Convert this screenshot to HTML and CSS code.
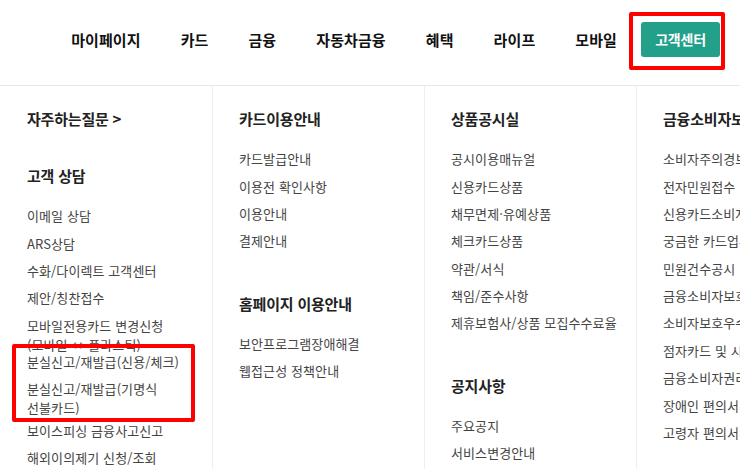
FILE: index.html
```html
<!DOCTYPE html>
<html lang="ko">

<head>
    <meta charset="utf-8">
    <title>고객센터</title>
    <link rel="stylesheet" href="styles.css">
</head>

<body>
    <header class="gnb">
        <ul class="gnb-list">
            <li><a href="#">마이페이지</a></li>
            <li><a href="#">카드</a></li>
            <li><a href="#">금융</a></li>
            <li><a href="#">자동차금융</a></li>
            <li><a href="#">혜택</a></li>
            <li><a href="#">라이프</a></li>
            <li><a href="#">모바일</a></li>
        </ul>
        <a href="#" class="btn-cs">고객센터</a>
    </header>

    <div class="submenu">
        <div class="col">
            <div class="menu-group menu-faq">
                <h3><a href="#">자주하는질문 &gt;</a></h3>
            </div>
            <div class="menu-group">
                <h3>고객 상담</h3>
                <ul class="menu-list">
                    <li><a href="#">이메일 상담</a></li>
                    <li><a href="#">ARS상담</a></li>
                    <li><a href="#">수화/다이렉트 고객센터</a></li>
                    <li><a href="#">제안/칭찬접수</a></li>
                    <li class="tight"><a href="#">모바일전용카드 변경신청 (모바일 ↔ 플라스틱)</a></li>
                    <li><a href="#">분실신고/재발급(신용/체크)</a></li>
                    <li class="tight-sm"><a href="#">분실신고/재발급(기명식 선불카드)</a></li>
                    <li><a href="#">보이스피싱 금융사고신고</a></li>
                    <li><a href="#">해외이의제기 신청/조회</a></li>
                </ul>
            </div>
        </div>

        <div class="col">
            <div class="menu-group">
                <h3>카드이용안내</h3>
                <ul class="menu-list">
                    <li><a href="#">카드발급안내</a></li>
                    <li><a href="#">이용전 확인사항</a></li>
                    <li><a href="#">이용안내</a></li>
                    <li><a href="#">결제안내</a></li>
                </ul>
            </div>
            <div class="menu-group">
                <h3>홈페이지 이용안내</h3>
                <ul class="menu-list">
                    <li><a href="#">보안프로그램장애해결</a></li>
                    <li><a href="#">웹접근성 정책안내</a></li>
                </ul>
            </div>
        </div>

        <div class="col">
            <div class="menu-group">
                <h3>상품공시실</h3>
                <ul class="menu-list">
                    <li><a href="#">공시이용매뉴얼</a></li>
                    <li><a href="#">신용카드상품</a></li>
                    <li><a href="#">채무면제·유예상품</a></li>
                    <li><a href="#">체크카드상품</a></li>
                    <li><a href="#">약관/서식</a></li>
                    <li><a href="#">책임/준수사항</a></li>
                    <li><a href="#">제휴보험사/상품 모집수수료율</a></li>
                </ul>
            </div>
            <div class="menu-group">
                <h3>공지사항</h3>
                <ul class="menu-list">
                    <li><a href="#">주요공지</a></li>
                    <li><a href="#">서비스변경안내</a></li>
                </ul>
            </div>
        </div>

        <div class="col">
            <div class="menu-group">
                <h3>금융소비자보호</h3>
                <ul class="menu-list">
                    <li><a href="#">소비자주의경보</a></li>
                    <li><a href="#">전자민원접수</a></li>
                    <li><a href="#">신용카드소비자보호</a></li>
                    <li><a href="#">궁금한 카드업무</a></li>
                    <li><a href="#">민원건수공시</a></li>
                    <li><a href="#">금융소비자보호실태평가</a></li>
                    <li><a href="#">소비자보호우수사례</a></li>
                    <li><a href="#">점자카드 및 시각장애인 안내</a></li>
                    <li><a href="#">금융소비자권리</a></li>
                    <li><a href="#">장애인 편의서비스</a></li>
                    <li><a href="#">고령자 편의서비스</a></li>
                </ul>
            </div>
        </div>
    </div>

    <!-- 강조 표시 -->
    <div class="mark mark-cs"></div>
    <div class="mark mark-lost"></div>
</body>

</html>
```

FILE: styles.css
```css
* {
    box-sizing: border-box;
}

html,
body {
    margin: 0;
    height: 100%;
    overflow: hidden;
}

body {
    position: relative;
    background: #fff;
    font-family: "Noto Sans CJK KR", "Noto Sans", sans-serif;
    color: #333;
    word-break: keep-all;
}

a {
    color: inherit;
    text-decoration: none;
}

ul {
    list-style: none;
    margin: 0;
    padding: 0;
}

/* 상단 메뉴 */
.gnb {
    display: flex;
    align-items: center;
    justify-content: flex-end;
    height: 86px;
    padding: 0 20px 7px 0;
    border-bottom: 1px solid #e8e8e8;
}

.gnb-list {
    display: flex;
    gap: 40px;
}

.gnb-list a {
    font-size: 15px;
    font-weight: bold;
    color: #111;
    letter-spacing: 0.1px;
}

.btn-cs {
    display: block;
    margin-left: 24px;
    width: 79px;
    height: 35px;
    line-height: 35px;
    text-align: center;
    border-radius: 3px;
    background-color: #22a08a;
    color: #fff;
    font-size: 14px;
    font-weight: bold;
    letter-spacing: -0.2px;
}

/* 하위 메뉴 */
.submenu {
    display: grid;
    grid-template-columns: repeat(4, 212px);
    height: 100%;
}

.col {
    padding: 22px 8px 0 27px;
}

.col + .col {
    border-left: 1px solid #eee;
    padding-left: 26px;
}

.menu-group + .menu-group {
    margin-top: 38px;
}

.menu-faq + .menu-group {
    margin-top: 35px;
}

.menu-group h3 {
    margin: 0 0 15px;
    font-size: 15px;
    line-height: 22px;
    font-weight: bold;
    color: #222;
    letter-spacing: -0.2px;
    white-space: nowrap;
}

.menu-list li {
    padding: 4.2px 0;
    font-size: 13px;
    line-height: 19px;
    color: #444;
    letter-spacing: 0.1px;
}

.menu-list li.tight {
    margin-bottom: -10px;
}

.menu-list li.tight-sm {
    margin-bottom: -5px;
}

.col:last-child .menu-list li {
    white-space: nowrap;
}

/* 빨간 강조 박스 */
.mark {
    position: absolute;
    border: 4px solid #f00;
    border-radius: 2px;
}

.mark-cs {
    left: 629px;
    top: 12px;
    width: 96px;
    height: 58px;
}

.mark-lost {
    left: 12px;
    top: 344px;
    width: 183px;
    height: 78px;
}
```
